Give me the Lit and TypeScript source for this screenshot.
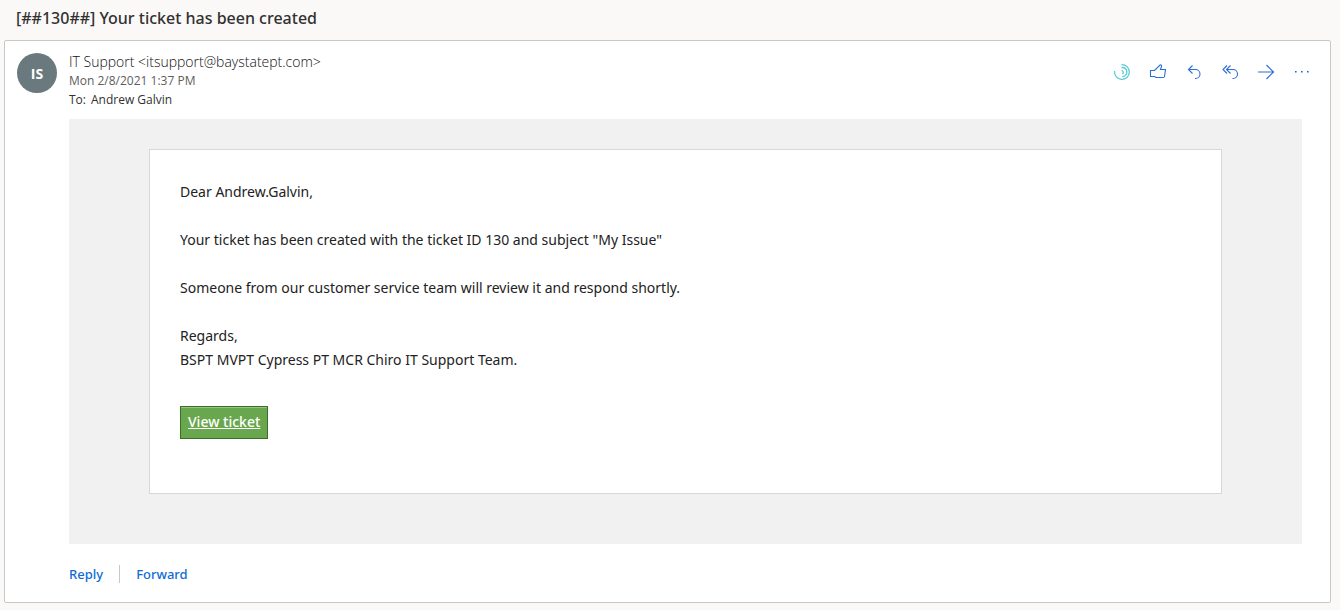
import { LitElement, html, css, svg } from "lit";
import { customElement, property } from "lit/decorators.js";

const icons: Record<string, unknown> = {
  insights: svg`<path d="M7.500 .6A7.400 7.400 0 1 1 .6 7M7.500 3.600a4.500 4.500 0 1 1 .8 8.900M7.500 6.300a2 2 0 0 1 .8 3.700" stroke="#5fc9d4" stroke-width="1.300"/>`,
  like: svg`<path d="M.5 6.500h4L10 1q2-.5 1.500 1.500L10.500 5.500h5L14.500 12.500q-.2 1-1.200 1H6L4.500 12.500H.5z"/>`,
  reply: svg`<path d="M6.500 1.500 2.500 5.500l4 4M2.500 5.500H9.500a4.500 4.500 0 0 1 0 9H9"/>`,
  replyAll: svg`<path d="M5 1.500 1 5.500l4 4M8.500 1.500l-4 4 4 4M4.500 5.500H11a4.500 4.500 0 0 1 0 9h-.5"/>`,
  forward: svg`<path d="M0 8h15.500M8.500 1l7 7-7 7" stroke-width="1.200"/>`,
  more: svg`<path d="M1 7h1.600v1.600H1zM7 7h1.600v1.600H7zM13 7h1.600v1.600H13z" fill="#0f6cd4" stroke="none"/>`,
};

@customElement("icon-button")
class IconButton extends LitElement {
  @property() icon = "";
  @property() label = "";

  static styles = css`
    :host { display: block; }
    .button {
      display: grid;
      place-items: center;
      width: 36px;
      height: 32px;
      padding: 0;
      border: 0;
      background: none;
      cursor: pointer;
    }
    .icon {
      width: 16px;
      height: 16px;
      fill: none;
      stroke: #2b70d4;
      stroke-width: 1.1;
      overflow: visible;
    }
  `;

  render() {
    return html`<button class="button" type="button" aria-label=${this.label}>
      <svg class="icon" viewBox="0 0 16 16" aria-hidden="true">${icons[this.icon]}</svg>
    </button>`;
  }
}

@customElement("app-root")
class AppRoot extends LitElement {
  static styles = css`
    :host {
      display: block;
      box-sizing: border-box;
      min-height: 100vh;
      padding: 0 9px 7px 4px;
      background: #faf9f8;
      color: #323130;
      font-family: "Segoe UI", "Open Sans", sans-serif;
      font-size: 12px;
    }
    .subject {
      margin: 0;
      padding: 6px 12px 10px;
      font-family: "Segoe UI", "Noto Sans", sans-serif;
      font-size: 16px;
      line-height: 24px;
      font-weight: 500;
    }
    .message {
      border: 1px solid #c8c8c8;
      border-radius: 2px;
      background: #fff;
      padding: 11px 10px 16px 12px;
    }
    .header {
      display: flex;
      align-items: flex-start;
      gap: 12px;
    }
    .avatar {
      display: grid;
      place-items: center;
      width: 40px;
      height: 40px;
      margin-top: 1px;
      border-radius: 50%;
      background: #69797e;
      color: #fff;
      font-size: 14px;
      font-weight: 700;
    }
    .meta { flex: 1; }
    .sender { color: #111; font-size: 14px; font-weight: 300; line-height: 20px; }
    .date { color: #605e5c; line-height: 18px; }
    .to { line-height: 20px; }
    .name { margin-left: 5px; }
    .actions { display: flex; padding-top: 4px; }
    .content { margin: 0 18px 0 52px; }
    .canvas {
      margin-top: 9px;
      padding: 30px 80px 50px;
      background: #f1f1f1;
    }
    .letter {
      border: 1px solid #d8d8d8;
      background: #fff;
      padding: 30px 30px 54px;
      color: #222;
      font-family: "Lucida Grande", "Noto Sans", sans-serif;
      font-size: 14px;
      line-height: 24px;
    }
    .text { margin: 0 0 24px; }
    .ticket {
      display: inline-block;
      margin-top: 10px;
      padding: 3px 7px 4px;
      border: 1px solid #3b6e22;
      box-shadow: inset 0 1px 0 #95c27e;
      background: #69a74e;
      color: #fff;
      font-weight: 500;
      text-decoration: underline;
    }
    .footer {
      display: flex;
      align-items: center;
      gap: 16px;
      margin-top: 18px;
    }
    .respond {
      padding: 0;
      border: 0;
      background: none;
      color: #0f6cd4;
      font: 500 13px/24px "Segoe UI", "Noto Sans", sans-serif;
      cursor: pointer;
    }
    .divider { width: 1px; height: 18px; background: #c8c8c8; }
  `;

  render() {
    return html`
      <h1 class="subject">[##130##] Your ticket has been created</h1>
      <article class="message">
        <header class="header">
          <div class="avatar">IS</div>
          <div class="meta">
            <div class="sender">IT Support &lt;itsupport@baystatept.com&gt;</div>
            <div class="date">Mon 2/8/2021 1:37 PM</div>
            <div class="to">To:<span class="name">Andrew Galvin</span></div>
          </div>
          <div class="actions">
            <icon-button icon="insights" label="Insights"></icon-button>
            <icon-button icon="like" label="Like"></icon-button>
            <icon-button icon="reply" label="Reply"></icon-button>
            <icon-button icon="replyAll" label="Reply all"></icon-button>
            <icon-button icon="forward" label="Forward"></icon-button>
            <icon-button icon="more" label="More actions"></icon-button>
          </div>
        </header>
        <div class="content">
          <div class="canvas">
            <div class="letter">
              <p class="text">Dear Andrew.Galvin,</p>
              <p class="text">Your ticket has been created with the ticket ID 130 and subject "My Issue"</p>
              <p class="text">Someone from our customer service team will review it and respond shortly.</p>
              <p class="text">Regards,<br />BSPT MVPT Cypress PT MCR Chiro IT Support Team.</p>
              <a class="ticket" href="#">View ticket</a>
            </div>
          </div>
          <footer class="footer">
            <button class="respond" type="button">Reply</button>
            <span class="divider"></span>
            <button class="respond" type="button">Forward</button>
          </footer>
        </div>
      </article>
    `;
  }
}
